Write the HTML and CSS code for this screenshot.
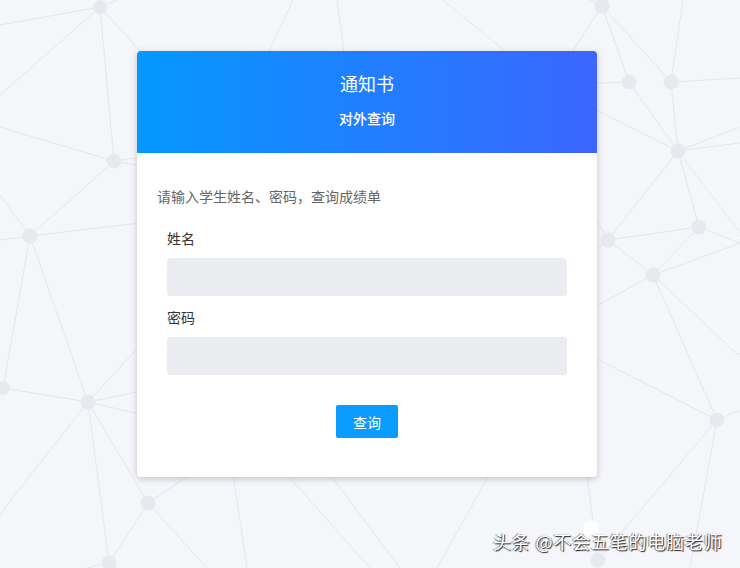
FILE: index.html
```html
<!DOCTYPE html>
<html lang="zh-CN">
<head>
    <meta charset="UTF-8">
    <meta name="viewport" content="width=device-width, initial-scale=1.0">
    <title>通知书</title>
    <link rel="stylesheet" href="styles.css">
</head>
<body>
    <!-- background network -->
    <svg class="bg-net" width="740" height="568" viewBox="0 0 740 568">
        <g class="edges">
            <line x1="100" y1="7" x2="0" y2="25"/>
            <line x1="100" y1="7" x2="0" y2="95"/>
            <line x1="100" y1="7" x2="114" y2="161"/>
            <line x1="100" y1="7" x2="180" y2="95"/>
            <line x1="100" y1="7" x2="118" y2="0"/>
            <line x1="114" y1="161" x2="30" y2="236"/>
            <line x1="114" y1="161" x2="0" y2="127"/>
            <line x1="114" y1="161" x2="200" y2="150"/>
            <line x1="114" y1="161" x2="200" y2="178"/>
            <line x1="30" y1="236" x2="0" y2="240"/>
            <line x1="30" y1="236" x2="0" y2="195"/>
            <line x1="30" y1="236" x2="3" y2="388"/>
            <line x1="30" y1="236" x2="88" y2="402"/>
            <line x1="30" y1="236" x2="250" y2="210"/>
            <line x1="3" y1="388" x2="88" y2="402"/>
            <line x1="88" y1="402" x2="250" y2="369"/>
            <line x1="88" y1="402" x2="250" y2="440"/>
            <line x1="88" y1="402" x2="200" y2="280"/>
            <line x1="88" y1="402" x2="0" y2="514"/>
            <line x1="88" y1="402" x2="148" y2="503"/>
            <line x1="88" y1="402" x2="109" y2="563"/>
            <line x1="148" y1="503" x2="109" y2="563"/>
            <line x1="148" y1="503" x2="220" y2="455"/>
            <line x1="148" y1="503" x2="207" y2="568"/>
            <line x1="109" y1="563" x2="87" y2="568"/>
            <line x1="225" y1="420" x2="247" y2="568"/>
            <line x1="230" y1="410" x2="370" y2="568"/>
            <line x1="300" y1="434" x2="400" y2="568"/>
            <line x1="520" y1="420" x2="437" y2="568"/>
            <line x1="580" y1="420" x2="598" y2="560"/>
            <line x1="443" y1="0" x2="540" y2="80"/>
            <line x1="255" y1="80" x2="293" y2="0"/>
            <line x1="337" y1="0" x2="345" y2="60"/>
            <line x1="602" y1="6" x2="550" y2="85"/>
            <line x1="602" y1="6" x2="671" y2="82"/>
            <line x1="602" y1="6" x2="629" y2="82"/>
            <line x1="602" y1="6" x2="590" y2="0"/>
            <line x1="683" y1="0" x2="671" y2="82"/>
            <line x1="629" y1="82" x2="678" y2="151"/>
            <line x1="671" y1="82" x2="678" y2="151"/>
            <line x1="629" y1="82" x2="570" y2="84"/>
            <line x1="671" y1="82" x2="740" y2="78"/>
            <line x1="678" y1="151" x2="740" y2="127"/>
            <line x1="678" y1="151" x2="740" y2="143"/>
            <line x1="678" y1="151" x2="560" y2="92"/>
            <line x1="678" y1="151" x2="608" y2="240"/>
            <line x1="678" y1="151" x2="699" y2="227"/>
            <line x1="678" y1="151" x2="740" y2="233"/>
            <line x1="608" y1="240" x2="699" y2="227"/>
            <line x1="699" y1="227" x2="653" y2="275"/>
            <line x1="699" y1="227" x2="740" y2="243"/>
            <line x1="653" y1="275" x2="740" y2="243"/>
            <line x1="608" y1="240" x2="653" y2="275"/>
            <line x1="608" y1="240" x2="580" y2="190"/>
            <line x1="608" y1="240" x2="580" y2="262"/>
            <line x1="653" y1="275" x2="717" y2="420"/>
            <line x1="653" y1="275" x2="740" y2="357"/>
            <line x1="653" y1="275" x2="580" y2="315"/>
            <line x1="717" y1="420" x2="740" y2="410"/>
            <line x1="717" y1="420" x2="560" y2="340"/>
            <line x1="717" y1="420" x2="598" y2="560"/>
            <line x1="717" y1="420" x2="690" y2="568"/>
        </g>
        <g class="nodes">
            <circle cx="100" cy="7" r="7"/>
            <circle cx="114" cy="161" r="7.5"/>
            <circle cx="30" cy="236" r="7.5"/>
            <circle cx="3" cy="388" r="7"/>
            <circle cx="88" cy="402" r="7.5"/>
            <circle cx="148" cy="503" r="7.5"/>
            <circle cx="109" cy="563" r="7.5"/>
            <circle cx="602" cy="6" r="7.5"/>
            <circle cx="629" cy="82" r="7.5"/>
            <circle cx="671" cy="82" r="7.5"/>
            <circle cx="678" cy="151" r="7.5"/>
            <circle cx="608" cy="240" r="7.5"/>
            <circle cx="699" cy="227" r="7.5"/>
            <circle cx="653" cy="275" r="7.5"/>
            <circle cx="717" cy="420" r="7.5"/>
            <circle cx="598" cy="560" r="7.5"/>
        </g>
    </svg>

    <div class="page">
        <div class="card">
            <div class="card-head">
                <h1 class="title">通知书</h1>
                <p class="subtitle">对外查询</p>
            </div>
            <div class="card-body">
                <p class="hint">请输入学生姓名、密码，查询成绩单</p>
                <div class="field">
                    <label for="name">姓名</label>
                    <input type="text" id="name">
                </div>
                <div class="field">
                    <label for="pwd">密码</label>
                    <input type="password" id="pwd">
                </div>
                <div class="actions">
                    <button class="button">查询</button>
                </div>
            </div>
        </div>
    </div>

    <div class="watermark">
        <span class="wm-dot"></span>
        <span class="wm-text">头条 @不会五笔的电脑老师</span>
    </div>
</body>
</html>
```

FILE: styles.css
```css
html, body {
    margin: 0;
    padding: 0;
    height: 100%;
}
body {
    background: #f5f6fa;
    font-family: "Noto Sans CJK SC", "Liberation Sans", sans-serif;
    overflow: hidden;
    position: relative;
}
.bg-net {
    position: absolute;
    left: 0;
    top: 0;
}
.bg-net .edges line {
    stroke: #e5e6ec;
    stroke-width: 1;
}
.bg-net .nodes circle {
    fill: #e8e9ee;
}
.page {
    position: relative;
    padding-top: 51px;
    padding-left: 137px;
}
.card {
    width: 460px;
    background: #fff;
    border-radius: 4px;
    box-shadow: 0 2px 6px rgba(60, 70, 90, 0.28);
    overflow: hidden;
}
.card-head {
    height: 102px;
    background: linear-gradient(to right, #0598ff, #3b66ff);
    color: #fff;
    text-align: center;
    box-sizing: border-box;
    padding-top: 19px;
}
.title {
    margin: 0;
    font-size: 18px;
    font-weight: normal;
    line-height: 26px;
}
.subtitle {
    margin: 12px 0 0;
    font-size: 14px;
    font-weight: 500;
    line-height: 20px;
}
.card-body {
    padding: 33px 20px 39px;
}
.hint {
    margin: 0;
    font-size: 14px;
    line-height: 20px;
    color: #666;
}
.field {
    padding: 0 10px;
}
.field:first-of-type {
    margin-top: 22px;
}
.field + .field {
    margin-top: 11px;
}
.field label {
    display: block;
    font-size: 14px;
    line-height: 20px;
    color: #333;
    margin-bottom: 10px;
}
.field input {
    display: block;
    width: 100%;
    height: 38px;
    box-sizing: border-box;
    border: none;
    border-radius: 4px;
    background: #ebecf0;
    outline: none;
    padding: 0 10px;
    font-size: 14px;
}
.actions {
    margin-top: 30px;
    text-align: center;
}
.button {
    width: 62px;
    height: 33px;
    border: none;
    border-radius: 2px;
    background: #0a9bff;
    color: #fff;
    font-size: 14px;
    font-family: inherit;
    padding: 0;
}
.watermark {
    position: absolute;
    left: 493px;
    top: 528px;
    height: 26px;
}
.wm-dot {
    position: absolute;
    left: 90px;
    top: -8px;
    width: 16px;
    height: 16px;
    border-radius: 50%;
    background: rgba(255, 255, 255, 0.85);
}
.wm-text {
    position: relative;
    font-size: 18px;
    line-height: 26px;
    color: #fff;
    white-space: nowrap;
    letter-spacing: 0.8px;
    text-shadow: 1px 1px 1px #222, -1px 0 1px rgba(0, 0, 0, 0.5);
}
```
